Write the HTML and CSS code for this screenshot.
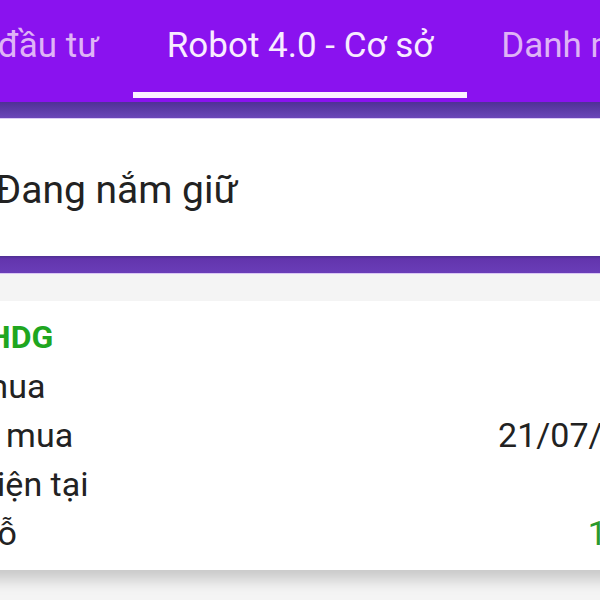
FILE: index.html
```html
<!DOCTYPE html>
<html lang="vi">
<head>
    <meta charset="UTF-8">
    <meta name="viewport" content="width=device-width, initial-scale=1.0">
    <title>Robot 4.0 - Cơ sở</title>
    <link rel="stylesheet" href="styles.css">
</head>
<body>
    <!-- Thanh tab -->
    <div class="tabs">
        <div class="tab tab-left">Tư vấn đầu tư</div>
        <div class="tab active">Robot 4.0 - Cơ sở</div>
        <div class="tab tab-right">Danh mục theo dõi</div>
    </div>
    <div class="tab-shadow"></div>

    <div class="section-title">Đang nắm giữ</div>
    <div class="divider"></div>

    <div class="list">
        <div class="card">
            <div class="ticker">Mã: <span class="green">HDG</span></div>
            <div class="row"><span>Giá mua</span><span>24.5</span></div>
            <div class="row"><span>Ngày mua</span><span>21/07/2021</span></div>
            <div class="row"><span>Giá hiện tại</span><span>27.6</span></div>
            <div class="row"><span>Lãi/Lỗ</span><span class="profit">12.5%</span></div>
        </div>
    </div>
</body>
</html>
```

FILE: styles.css
```css
/* Estilos generales */
body {
    margin: 0;
    width: 600px;
    height: 600px;
    overflow: hidden;
    font-family: Roboto, "Noto Sans", sans-serif;
    background-color: #f4f4f4;
    color: #222222;
}
.tabs {
    display: grid;
    grid-template-columns: minmax(0, 1fr) auto minmax(0, 1fr);
    height: 102px;
    background-color: #8a12ef;
    overflow: hidden;
}
.tab {
    padding: 0 34px;
    font-size: 35px;
    line-height: 92px;
    white-space: nowrap;
    color: #dfb3f6;
}
.tab-left {
    justify-self: end;
}
.tab-right {
    justify-self: start;
}
.tab.active {
    color: #f8ecff;
    border-bottom: 6px solid #fbf3ff;
    height: 92px;
    margin-bottom: 4px;
}
.tab-shadow {
    height: 16px;
    background: linear-gradient(#4f3096, #6b46b9);
    border-bottom: 1px solid #dccaf6;
}
.section-title {
    height: 137px;
    line-height: 142px;
    margin-left: -5px;
    font-size: 39px;
    background-color: #ffffff;
}
.divider {
    height: 17px;
    background: linear-gradient(#4e2f92 0, #6335ad 3px, #6a3db8 100%);
    border-bottom: 1px solid #d9c6f4;
}
.list {
    padding-top: 27px;
    margin-left: -96px;
    width: 791px;
}
.card {
    background-color: #ffffff;
    padding: 12px 16px;
    box-shadow: 0 14px 14px -4px rgba(0, 0, 0, 0.18);
    font-size: 34px;
    line-height: 49px;
}
.ticker {
    padding-left: 6px;
    font-size: 32px;
    font-weight: bold;
    color: #222222;
}
.green {
    color: #1fa61f;
}
.row {
    display: flex;
    justify-content: space-between;
}
.profit {
    color: #2b9a2b;
}
```
